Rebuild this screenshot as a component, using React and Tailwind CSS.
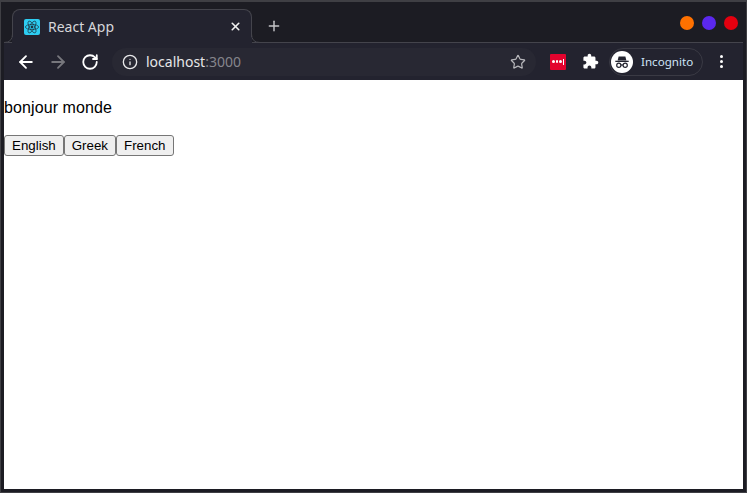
import { ArrowLeft, ArrowRight, RotateCw, Info, Star, X, Plus } from "lucide-react";

const uiFont = { fontFamily: '"Noto Sans", sans-serif' };

function ReactLogo() {
  return (
    <svg width="16" height="16" viewBox="0 0 16 16" className="rounded-[2px] bg-[#2dcdf2]">
      <circle cx="8" cy="8" r="1.4" fill="#1d3340" />
      <g fill="none" stroke="#1d3340" strokeWidth="0.7">
        <ellipse cx="8" cy="8" rx="6.6" ry="2.6" />
        <ellipse cx="8" cy="8" rx="6.6" ry="2.6" transform="rotate(60 8 8)" />
        <ellipse cx="8" cy="8" rx="6.6" ry="2.6" transform="rotate(120 8 8)" />
      </g>
    </svg>
  );
}

function IncognitoIcon() {
  return (
    <svg width="22" height="22" viewBox="0 0 22 22">
      <circle cx="11" cy="11" r="11" fill="#fff" />
      <path d="M7.6 5.4h6.8l1 4H6.6z" fill="#23242f" />
      <rect x="4.3" y="9.7" width="13.4" height="1.3" fill="#23242f" />
      <g fill="none" stroke="#23242f" strokeWidth="1.2">
        <circle cx="7.8" cy="14.3" r="2.1" />
        <circle cx="14.2" cy="14.3" r="2.1" />
        <path d="M9.9 14h2.2" />
      </g>
    </svg>
  );
}

function PuzzleIcon() {
  return (
    <svg width="17" height="17" viewBox="0 0 24 24" fill="#fff" className="ml-[16px]">
      <path d="M20.5 11H19V7c0-1.100-.9-2-2-2h-4V3.500C13 2.120 11.880 1 10.500 1S8 2.120 8 3.500V5H4c-1.100 0-1.990.9-1.990 2v3.800H3.500c1.490 0 2.700 1.210 2.700 2.700s-1.210 2.700-2.700 2.700H2V20c0 1.100.9 2 2 2h3.800v-1.500c0-1.490 1.210-2.700 2.700-2.700 1.490 0 2.700 1.210 2.700 2.700V22H17c1.100 0 2-.9 2-2v-4h1.500c1.380 0 2.500-1.120 2.500-2.500S21.880 11 20.500 11z" />
    </svg>
  );
}

function LastPassIcon() {
  return (
    <div className="flex h-4 w-4 items-center justify-center gap-[1px] rounded-[1px] bg-[#e3032e]">
      <span className="h-[2.5px] w-[2.5px] rounded-full bg-white" />
      <span className="h-[2.5px] w-[2.5px] rounded-full bg-white" />
      <span className="h-[2.5px] w-[2.5px] rounded-full bg-white" />
      <span className="h-[6px] w-[1px] bg-white" />
    </div>
  );
}

function Dot({ color }) {
  return <div className={`h-[14px] w-[14px] rounded-full ${color}`} />;
}

function LangButton({ children }) {
  return (
    <button
      className="box-border h-[21px] rounded-[3px] border border-[#767676] bg-[#efefef] px-[7px] text-[13.333px] leading-[15px] text-black"
      style={{ fontFamily: '"Liberation Sans", Arial, sans-serif' }}
    >
      {children}
    </button>
  );
}

export default function App() {
  return (
    <div
      className="box-border flex h-[493px] w-[747px] flex-col overflow-hidden border-x border-b border-t-2 border-[#3f3f44] bg-[#1c1c23]"
      style={uiFont}
    >
      {/* tab strip */}
      <div className="flex h-[40px] shrink-0 items-end pl-[11px]">
        <div className="relative z-10 -mb-[1px] flex h-[34px] w-[240px] items-center rounded-t-[8px] border border-b-0 border-[#44444c] bg-[#23232f] pl-[11px] pr-[9px]">
          {/* curved feet of the tab */}
          <svg width="9" height="9" viewBox="0 0 9 9" fill="none" className="absolute -left-[9px] bottom-0">
            <rect x="8" y="3" width="1" height="6" fill="#23232f" />
            <path d="M8.5 0Q8.5 8.500 0 8.500" stroke="#44444c" />
          </svg>
          <svg width="9" height="9" viewBox="0 0 9 9" fill="none" className="absolute -right-[9px] bottom-0">
            <rect x="0" y="3" width="1" height="6" fill="#23232f" />
            <path d="M.5 0Q.5 8.500 9 8.500" stroke="#44444c" />
          </svg>
          <ReactLogo />
          <span className="ml-[8px] flex-1 text-[14px] leading-none text-[#d6d6da]">React App</span>
          <X size={13} strokeWidth={3} className="text-[#f0f0f0]" />
        </div>
        <Plus size={16} strokeWidth={2.2} className="mb-[8px] ml-[14px] text-[#c4c4c8]" />
        <div className="mb-[12px] ml-auto flex items-center gap-[8px] pr-[8px]">
          <Dot color="bg-[#ff7100]" />
          <Dot color="bg-[#5b28ee]" />
          <Dot color="bg-[#e4000f]" />
        </div>
      </div>

      {/* toolbar */}
      <div className="mx-[3px] box-content flex h-[37px] shrink-0 items-center border-t border-[#44444c] bg-[#23232f]">
        <ArrowLeft size={20} strokeWidth={2.2} className="ml-[12px] text-white" />
        <ArrowRight size={20} strokeWidth={2.2} className="ml-[12px] text-[#77777d]" />
        <RotateCw size={18} strokeWidth={2.4} className="ml-[13px] text-white" />
        <div className="ml-[13px] flex h-[28px] w-[424px] items-center rounded-full bg-[#282833] px-[10px]">
          <Info size={16} strokeWidth={2} className="text-[#e8e8ea]" />
          <span className="ml-[8px] flex-1 text-[14px] leading-none text-[#e6e6e8]">
            localhost<span className="text-[#85858c]">:3000</span>
          </span>
          <Star size={16} strokeWidth={1.8} className="text-[#b8b8bc]" />
        </div>
        <div className="ml-[14px]">
          <LastPassIcon />
        </div>
        <PuzzleIcon />
        <div className="ml-[10px] flex h-[28px] w-[94px] items-center rounded-full border border-[#3a3a44] pl-[1px]">
          <IncognitoIcon />
          <span className="ml-[8px] text-[11.6px] leading-none text-[#cfe3f7]">Incognito</span>
        </div>
        <div className="ml-[17px] flex flex-col gap-[2px]">
          <span className="h-[3px] w-[3px] rounded-full bg-white" />
          <span className="h-[3px] w-[3px] rounded-full bg-white" />
          <span className="h-[3px] w-[3px] rounded-full bg-white" />
        </div>
      </div>

      {/* page */}
      <div
        className="mx-[3px] mb-[3px] flex-1 bg-white text-black"
        style={{ fontFamily: '"Liberation Sans", Arial, sans-serif' }}
      >
        <p className="pt-[19px] text-[16px] leading-[18px] tracking-[0.1px]">bonjour monde</p>
        <div className="mt-[18px] flex">
          <LangButton>English</LangButton>
          <LangButton>Greek</LangButton>
          <LangButton>French</LangButton>
        </div>
      </div>
    </div>
  );
}
